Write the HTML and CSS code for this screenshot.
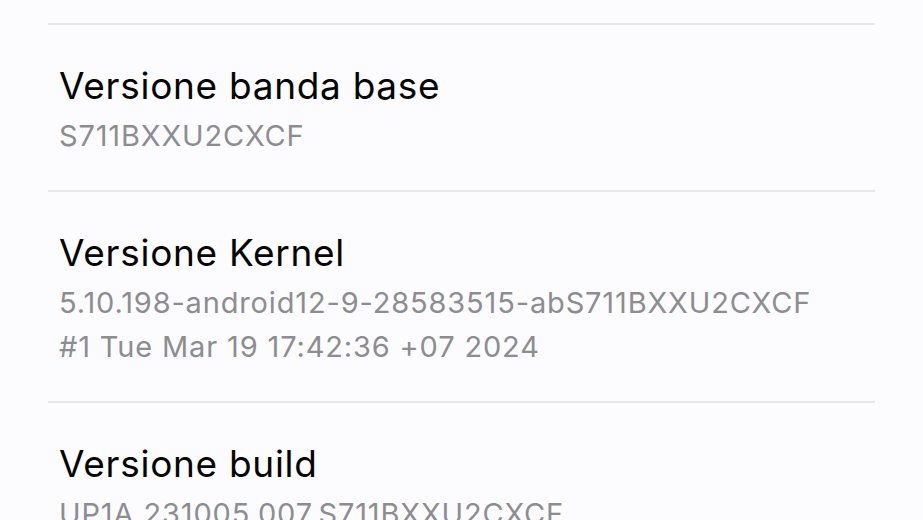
FILE: index.html
```html
<!DOCTYPE html>
<html lang="it">
<head>
<meta charset="utf-8">
<title>Informazioni software</title>
<link rel="stylesheet" href="styles.css">
</head>
<body>
<div class="list">
  <div class="item">
    <div class="title">Versione banda base</div>
    <div class="sub">S711BXXU2CXCF</div>
  </div>
  <div class="item">
    <div class="title">Versione Kernel</div>
    <div class="sub">5.10.198-android12-9-28583515-abS711BXXU2CXCF<br>#1 Tue Mar 19 17:42:36 +07 2024</div>
  </div>
  <div class="item">
    <div class="title">Versione build</div>
    <div class="sub">UP1A.231005.007.S711BXXU2CXCF</div>
  </div>
</div>
</body>
</html>
```

FILE: styles.css
```css
html, body {
  margin: 0;
  padding: 0;
  background: #fcfcfe;
}
body {
  font-family: Inter, "Noto Sans", sans-serif;
  overflow: hidden;
  height: 520px;
}
.list {
  padding: 23px 48px 0 48px;
}
.item {
  border-top: 2px solid #e7e7e9;
  padding: 37px 11px 32px 11px;
}
.title {
  font-size: 37px;
  line-height: 48px;
  letter-spacing: 0.7px;
  color: #050505;
}
.sub {
  margin-top: 4px;
  font-size: 29px;
  line-height: 44px;
  letter-spacing: 0.85px;
  color: #8d8d91;
}
```
